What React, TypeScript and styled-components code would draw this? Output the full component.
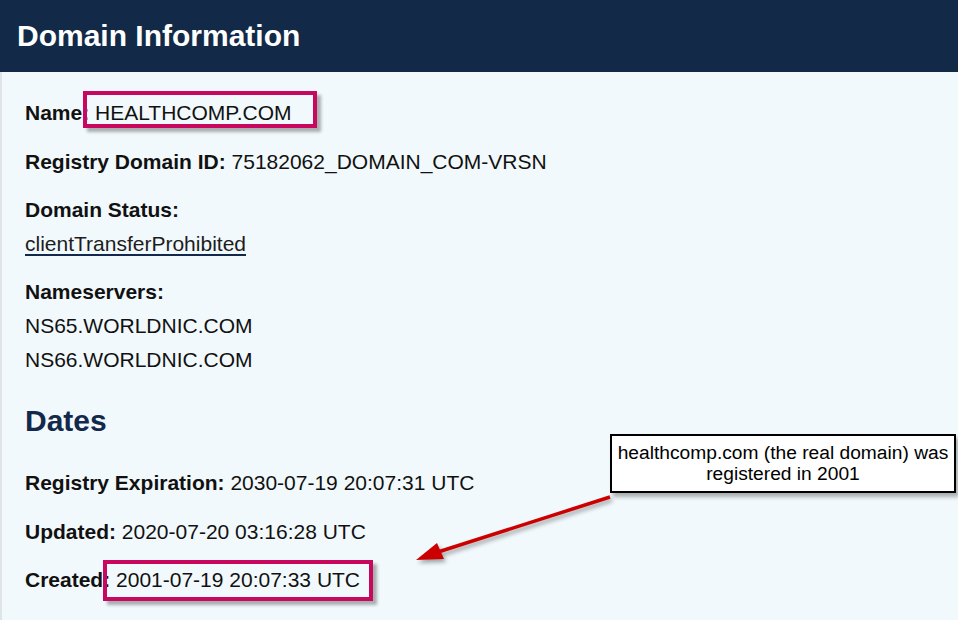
import React from "react";
import styled, { createGlobalStyle } from "styled-components";

const GlobalStyle = createGlobalStyle`
  html, body {
    margin: 0;
    padding: 0;
    background: #f2f9fc;
  }
  body {
    font-family: "Liberation Sans", Arial, sans-serif;
    color: #111;
  }
`;

const Page = styled.div`
  position: relative;
  width: 958px;
  height: 620px;
  overflow: hidden;
  background: #f2f9fc;
`;

const Header = styled.header`
  height: 72px;
  background: #122a48;
  display: flex;
  align-items: center;
  padding-left: 17px;
  box-sizing: border-box;
`;

const Title = styled.h1`
  margin: 0;
  color: #ffffff;
  font-size: 30px;
  font-weight: 700;
  line-height: 1;
`;

const Content = styled.main`
  border-left: 2px solid #e1e4e6;
  padding: 24px 0 0 23px;
  height: 548px;
  box-sizing: border-box;
`;

const Field = styled.div`
  margin: 0 0 15px;
  font-size: 21px;
  line-height: 33.6px;
`;

const Line = styled.div`
  white-space: nowrap;
`;

const Label = styled.strong`
  font-weight: 700;
  color: #111;
`;

const Link = styled.a`
  color: #1d1d1d;
  text-decoration: underline;
  text-decoration-color: #13294b;
  text-underline-offset: 3px;
`;

const SectionTitle = styled.h2`
  margin: 27px 0 27px;
  font-size: 30px;
  font-weight: 700;
  line-height: 36px;
  color: #13294b;
`;

const Highlight = styled.span<{ $l: number; $r: number; $t: number; $b: number }>`
  position: relative;
  display: inline-block;
  &::after {
    content: "";
    position: absolute;
    left: ${(p) => p.$l}px;
    right: ${(p) => p.$r}px;
    top: ${(p) => p.$t}px;
    bottom: ${(p) => p.$b}px;
    border: 4px solid #c8075f;
    box-shadow: 4px 4px 3px rgba(0, 0, 0, 0.3);
    pointer-events: none;
  }
`;

const Callout = styled.div`
  position: absolute;
  left: 610px;
  top: 434px;
  width: 346px;
  box-sizing: border-box;
  border: 2px solid #000;
  background: #fff;
  padding: 6px 2px 7px;
  text-align: center;
  font-size: 19.2px;
  line-height: 21px;
  color: #000;
  box-shadow: 3px 4px 4px rgba(0, 0, 0, 0.3);
`;

const Arrow = styled.svg`
  position: absolute;
  left: 400px;
  top: 480px;
  width: 220px;
  height: 100px;
  overflow: visible;
  filter: drop-shadow(2px 3px 2px rgba(0, 0, 0, 0.35));
`;

export default function App() {
  return (
    <>
      <GlobalStyle />
      <Page>
        <Header>
          <Title>Domain Information</Title>
        </Header>
        <Content>
          <Field>
            <Line>
              <Label>Name:</Label>{" "}
              <Highlight $l={-12} $r={-26} $t={-5} $b={2}>
                HEALTHCOMP.COM
              </Highlight>
            </Line>
          </Field>
          <Field>
            <Line>
              <Label>Registry Domain ID:</Label> 75182062_DOMAIN_COM-VRSN
            </Line>
          </Field>
          <Field>
            <Line>
              <Label>Domain Status:</Label>
            </Line>
            <Line>
              <Link href="#">clientTransferProhibited</Link>
            </Line>
          </Field>
          <Field>
            <Line>
              <Label>Nameservers:</Label>
            </Line>
            <Line>NS65.WORLDNIC.COM</Line>
            <Line>NS66.WORLDNIC.COM</Line>
          </Field>
          <SectionTitle>Dates</SectionTitle>
          <Field>
            <Line>
              <Label>Registry Expiration:</Label> 2030-07-19 20:07:31 UTC
            </Line>
          </Field>
          <Field>
            <Line>
              <Label>Updated:</Label> 2020-07-20 03:16:28 UTC
            </Line>
          </Field>
          <Field>
            <Line>
              <Label>Created:</Label>{" "}
              <Highlight $l={-13} $r={-13} $t={-3} $b={-4}>
                2001-07-19 20:07:33 UTC
              </Highlight>
            </Line>
          </Field>
        </Content>
        <Arrow viewBox="0 0 220 100">
          <line x1="210" y1="17" x2="38" y2="72" stroke="#cc0000" strokeWidth="3.5" />
          <polygon points="16,80 44,79 37,63" fill="#cc0000" />
        </Arrow>
        <Callout>
          healthcomp.com (the real domain) was
          <br />
          registered in 2001
        </Callout>
      </Page>
    </>
  );
}
